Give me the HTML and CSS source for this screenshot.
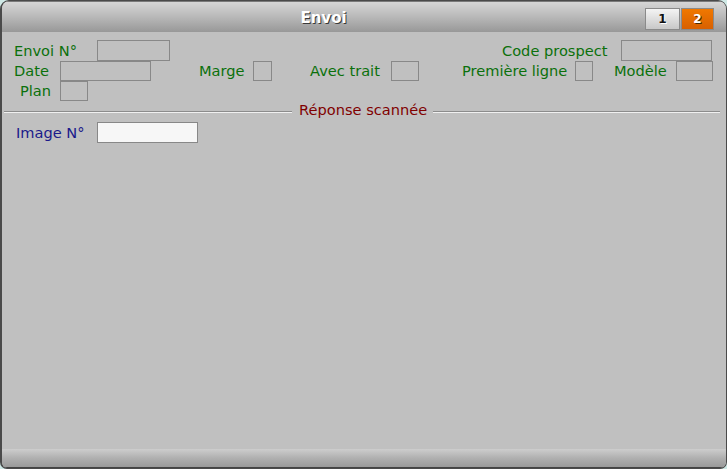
FILE: index.html
```html
<!DOCTYPE html>
<html>
<head>
<meta charset="utf-8">
<link rel="stylesheet" href="styles.css">
</head>
<body>
<div class="window">
  <div class="titlebar">
    <div class="title">Envoi</div>
    <div class="tabs">
      <span class="tab tab-1">1</span>
      <span class="tab tab-2">2</span>
    </div>
  </div>
  <div class="content">
    <div class="row row-1">
      <span class="lbl w-envoi">Envoi N°</span><span class="fld f-envoi"></span>
      <span class="lbl w-code">Code prospect</span><span class="fld f-code"></span>
    </div>
    <div class="row row-2">
      <span class="lbl w-date">Date</span><span class="fld f-date"></span>
      <span class="lbl w-marge">Marge</span><span class="fld f-marge"></span>
      <span class="lbl w-avec">Avec trait</span><span class="fld f-avec"></span>
      <span class="lbl w-prem">Première ligne</span><span class="fld f-prem"></span>
      <span class="lbl w-mod">Modèle</span><span class="fld f-mod"></span>
    </div>
    <div class="row row-3">
      <span class="lbl w-plan">Plan</span><span class="fld f-plan"></span>
    </div>
    <div class="section">
      <span class="line line-left"></span>
      <span class="section-title">Réponse scannée</span>
      <span class="line line-right"></span>
    </div>
    <div class="row row-img">
      <span class="lbl blue w-img">Image N°</span><span class="fld white f-img"></span>
    </div>
  </div>
  <div class="bottombar"></div>
</div>
</body>
</html>
```

FILE: styles.css
```css
html, body {
  margin: 0;
  padding: 0;
  background: #cfe9e6;
}
body {
  width: 727px;
  height: 469px;
  overflow: hidden;
  font-family: "DejaVu Sans", Verdana, sans-serif;
}
.window {
  width: 727px;
  height: 469px;
  box-sizing: border-box;
  border: 1px solid #4a4a4a;
  border-left-width: 2px;
  border-radius: 9px 9px 7px 7px;
  background: #c0c0c0;
  overflow: hidden;
  display: flex;
  flex-direction: column;
}
.titlebar {
  height: 31px;
  flex: none;
  display: flex;
  align-items: center;
  background: linear-gradient(#d6d6d6, #b8b8b8 50%, #989898);
  border-top: 1px solid #7a7a7a;
  box-sizing: border-box;
}
.title {
  width: 643px;
  text-align: center;
  font-weight: bold;
  font-size: 15px;
  color: #ffffff;
  text-shadow: 1px 1px 0 #3a3a3a;
  padding-top: 2px;
}
.tabs {
  display: flex;
  gap: 1px;
  margin-top: 3px;
}
.tab {
  width: 33px;
  height: 20px;
  border: 1px solid #8a8a8a;
  display: flex;
  align-items: center;
  justify-content: center;
  font-size: 12px;
  font-weight: bold;
}
.tab-1 {
  background: linear-gradient(#f4f4f4, #c8c8c8);
  color: #111;
  text-shadow: 1px 1px 0 #ffffff;
}
.tab-2 {
  width: 31px;
  background: linear-gradient(#f07800, #d86000);
  color: #ffffff;
  text-shadow: 1px 1px 0 #4a2a00;
}
.content {
  flex: 1;
  padding-top: 8px;
}
.row {
  display: flex;
  align-items: center;
  height: 20px;
  font-size: 14.6px;
  color: #0b700b;
}
.row-1 { height: 21px; }
.lbl {
  flex: none;
  white-space: nowrap;
  line-height: 20px;
}
.blue { color: #1a1a8a; }
.fld {
  flex: none;
  box-sizing: border-box;
  height: 20px;
  border: 1px solid #888888;
}
.row-1 .fld { height: 21px; }
.white {
  background: #f7f7f7;
  height: 21px;
}
/* row 1 */
.w-envoi { margin-left: 12px; width: 83px; }
.f-envoi { width: 73px; }
.w-code { margin-left: 332px; width: 119px; }
.f-code { width: 91px; }
/* row 2 */
.w-date { margin-left: 12px; width: 46px; }
.f-date { width: 91px; }
.w-marge { margin-left: 48px; width: 54px; }
.f-marge { width: 19px; }
.w-avec { margin-left: 38px; width: 81px; }
.f-avec { width: 28px; }
.w-prem { margin-left: 43px; width: 113px; }
.f-prem { width: 18px; }
.w-mod { margin-left: 21px; width: 62px; }
.f-mod { width: 37px; }
/* row 3 */
.w-plan { margin-left: 18px; width: 40px; }
.f-plan { width: 28px; }
/* section */
.section {
  display: flex;
  align-items: center;
  height: 20px;
}
.line {
  height: 1px;
  border-bottom: 1px solid #f0f0f0;
  background: #8c8c8c;
  margin-top: 2px;
}
.line-left { margin-left: 2px; width: 288px; }
.line-right { flex: 1; margin-right: 6px; }
.section-title {
  font-size: 14.6px;
  color: #800000;
  padding: 0 6px 0 7px;
  line-height: 18px;
  margin-bottom: 3px;
}
.row-img { margin-top: 1px; height: 21px; }
.w-img { margin-left: 14px; width: 81px; }
.f-img { width: 101px; }
.bottombar {
  height: 18px;
  flex: none;
  background: linear-gradient(#cdcdcd, #b0b0b0 50%, #9a9a9a);
  border-bottom: 1px solid #444;
}
```
